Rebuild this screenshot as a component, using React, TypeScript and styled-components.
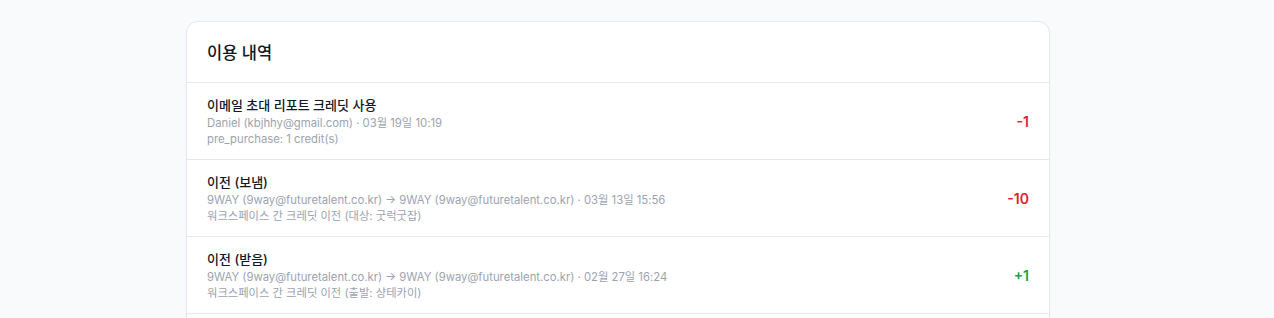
import styled, { createGlobalStyle } from 'styled-components';

type Entry = {
	title: string;
	meta: string;
	note: string;
	amount: number;
};

const entries: Entry[] = [
	{
		title: '이메일 초대 리포트 크레딧 사용',
		meta: 'Daniel (kbjhhy@gmail.com) · 03월 19일 10:19',
		note: 'pre_purchase: 1 credit(s)',
		amount: -1,
	},
	{
		title: '이전 (보냄)',
		meta: '9WAY (9way@futuretalent.co.kr) → 9WAY (9way@futuretalent.co.kr) · 03월 13일 15:56',
		note: '워크스페이스 간 크레딧 이전 (대상: 굿럭굿잡)',
		amount: -10,
	},
	{
		title: '이전 (받음)',
		meta: '9WAY (9way@futuretalent.co.kr) → 9WAY (9way@futuretalent.co.kr) · 02월 27일 16:24',
		note: '워크스페이스 간 크레딧 이전 (출발: 샹테카이)',
		amount: 1,
	},
];

const GlobalStyle = createGlobalStyle`
	html, body {
		margin: 0;
		padding: 0;
		background: #f9fafb;
		font-family: Inter, "Noto Sans CJK KR", sans-serif;
		color: #111827;
	}
`;

const Page = styled.main`
	padding: 21px 0 0 186px;
`;

const Card = styled.section`
	width: 864px;
	box-sizing: border-box;
	background: #ffffff;
	border: 1px solid #e5e7eb;
	border-radius: 12px;
	box-shadow: 0 1px 2px rgba(0, 0, 0, 0.04);
	overflow: hidden;
	padding-bottom: 24px;
`;

const CardHeader = styled.header`
	height: 60px;
	padding: 0 20px;
	display: flex;
	align-items: center;
	border-bottom: 1px solid #e5e7eb;

	h2 {
		margin: 0;
		font-size: 16.5px;
		font-weight: 500;
		color: #111827;
	}
`;

const Row = styled.div`
	height: 76px;
	padding: 0 20px;
	display: flex;
	align-items: center;
	justify-content: space-between;
	border-bottom: 1px solid #e5e7eb;
`;

const Info = styled.div`
	display: flex;
	flex-direction: column;
`;

const Title = styled.div`
	font-size: 13px;
	font-weight: 500;
	line-height: 18px;
	margin-bottom: 1px;
	color: #111827;
`;

const Meta = styled.div`
	font-size: 11.3px;
	line-height: 16px;
	color: #9ca3af;
`;

const Amount = styled.div<{ $positive: boolean }>`
	font-size: 14px;
	font-weight: 600;
	color: ${(p) => (p.$positive ? '#16a34a' : '#e11d2e')};
`;

const App = () => {
	return (
		<>
			<GlobalStyle />
			<Page>
				<Card>
					<CardHeader>
						<h2>이용 내역</h2>
					</CardHeader>
					{entries.map((e, i) => (
						<Row key={i}>
							<Info>
								<Title>{e.title}</Title>
								<Meta>{e.meta}</Meta>
								<Meta>{e.note}</Meta>
							</Info>
							<Amount $positive={e.amount > 0}>{e.amount > 0 ? `+${e.amount}` : e.amount}</Amount>
						</Row>
					))}
				</Card>
			</Page>
		</>
	);
};

export default App;
